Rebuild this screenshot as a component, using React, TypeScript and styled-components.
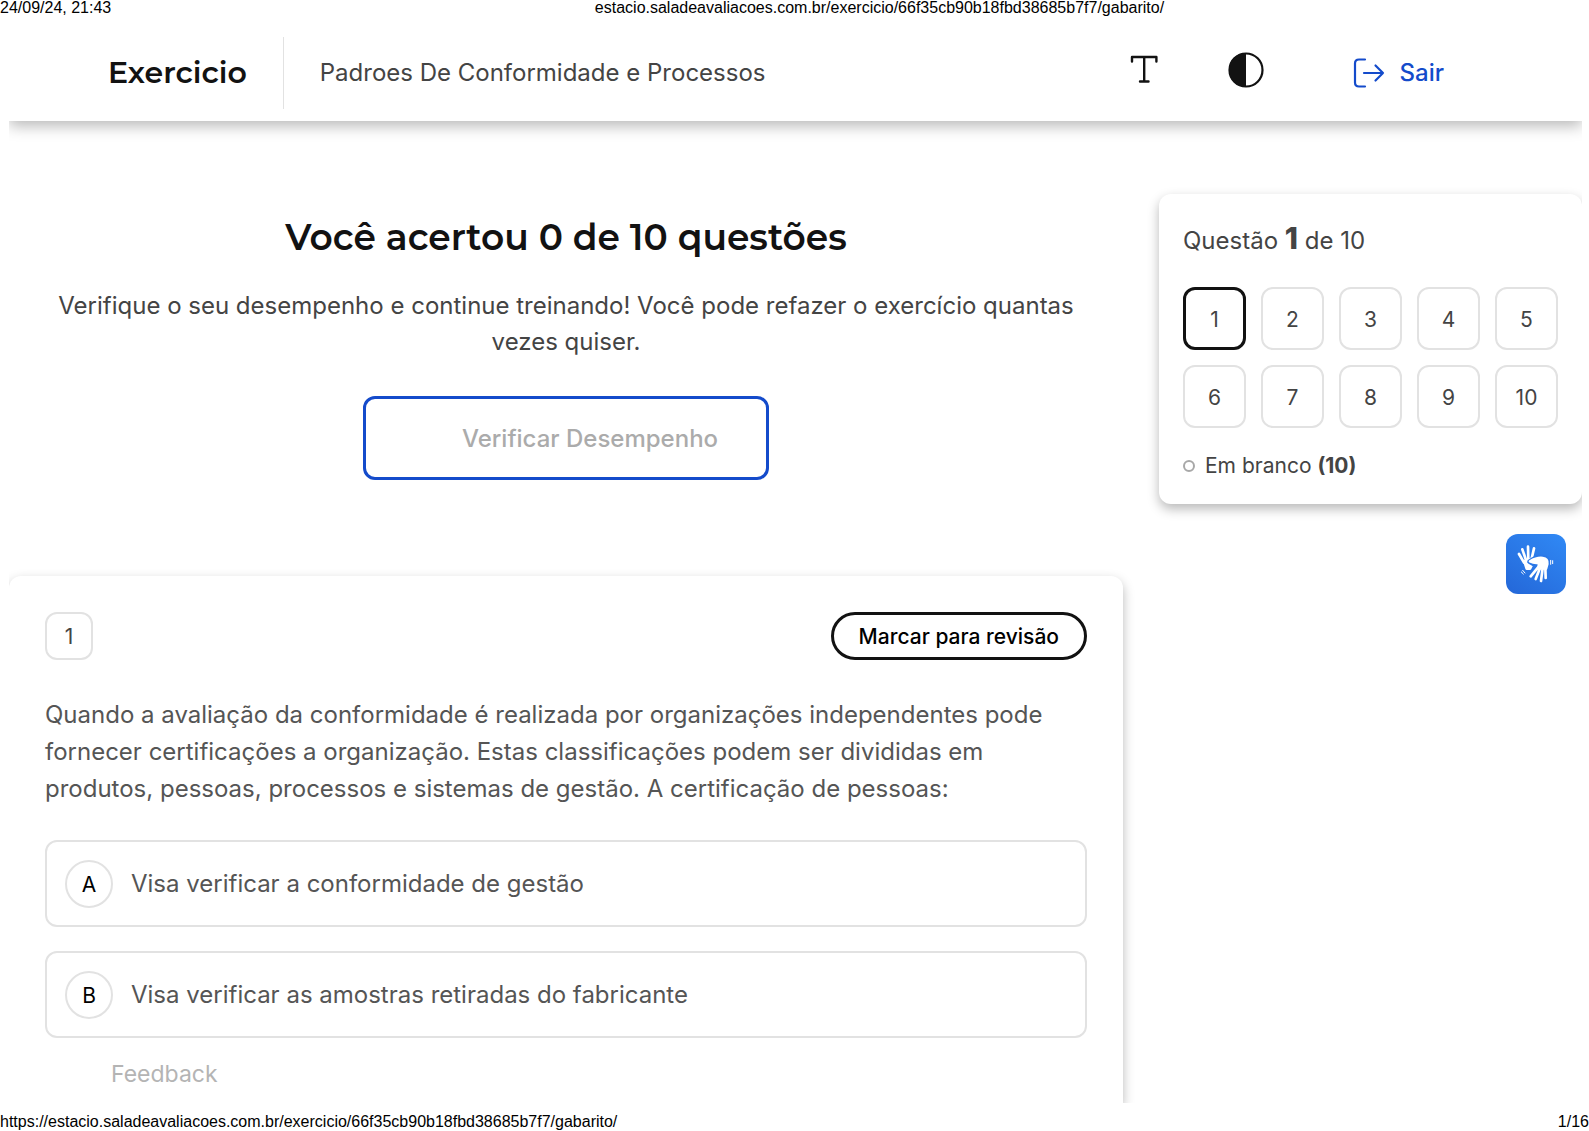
import React, { useState } from "react";
import styled, { createGlobalStyle } from "styled-components";

const ink = "#121212";
const text = "#444444";
const softText = "#555555";
const muted = "#ababab";
const line = "#e2e2e2";
const blue = "#144bcb";

const GlobalStyle = createGlobalStyle`
  *, *::before, *::after { box-sizing: border-box; }
  body {
    margin: 0;
    background: #ffffff;
    color: ${text};
    font-family: Inter, "Liberation Sans", sans-serif;
    font-size: 24px;
    line-height: 36px;
  }
  h1, h2, p { margin: 0; }
  button { font-family: inherit; cursor: pointer; }
`;

const Page = styled.div`
  display: flex;
  flex-direction: column;
  min-height: 100vh;
`;

const PrintLine = styled.div`
  display: grid;
  grid-template-columns: 7fr auto 5fr;
  align-items: start;
  color: #000000;
  font-family: "Liberation Sans", Arial, sans-serif;
  font-size: 16px;
  line-height: 16px;
`;

const PrintTop = styled(PrintLine)`
  height: 25px;
`;

const PrintBottom = styled(PrintLine)`
  grid-template-columns: 1fr auto;
  height: 28px;
  align-items: center;
  padding-top: 10px;
`;

const PrintLabel = styled.span`
  white-space: nowrap;
`;

const Sheet = styled.div`
  flex: 1;
  display: flex;
  flex-direction: column;
  margin: 0 7px 0 9px;
  overflow: hidden;
`;

const Header = styled.header`
  display: flex;
  align-items: center;
  justify-content: space-between;
  height: 96px;
  padding: 0 138px 0 99px;
  background: #ffffff;
  box-shadow: 0 5px 14px rgba(0, 0, 0, 0.28);
  clip-path: inset(0 0 -24px 0);
`;

const Titles = styled.div`
  display: flex;
  align-items: center;
`;

const Brand = styled.h1`
  padding-right: 36px;
  border-right: 1px solid ${line};
  color: ${ink};
  font-family: Montserrat, Inter, sans-serif;
  font-size: 30px;
  font-weight: 600;
  line-height: 72px;
`;

const Subject = styled.p`
  padding-left: 36px;
`;

const Actions = styled.div`
  display: flex;
  align-items: center;
`;

const IconButton = styled.button`
  display: flex;
  margin: 0 66px 6px 0;
  padding: 0;
  border: 0;
  background: none;
  color: ${ink};
`;

const ExitLink = styled.a`
  display: flex;
  align-items: center;
  gap: 13px;
  margin-left: 21px;
  color: ${blue};
  font-weight: 500;
  text-decoration: none;
`;

const Main = styled.main`
  flex: 1;
  display: grid;
  grid-template-columns: minmax(0, 1fr) 423px;
  column-gap: 36px;
  padding-top: 73px;
`;

const Column = styled.div`
  display: flex;
  flex-direction: column;
`;

const Score = styled.section`
  display: flex;
  flex-direction: column;
  align-items: center;
  padding: 20px 36px 96px;
  text-align: center;
`;

const ScoreTitle = styled.h2`
  margin-bottom: 28px;
  color: ${ink};
  font-family: Montserrat, Inter, sans-serif;
  font-size: 36px;
  font-weight: 600;
  line-height: 46px;
`;

const PerformanceButton = styled.button`
  height: 84px;
  margin-top: 36px;
  padding: 0 48px 0 96px;
  border: 3px solid ${blue};
  border-radius: 12px;
  background: none;
  color: ${muted};
  font-size: 24px;
  font-weight: 500;
`;

const QuestionCard = styled.section`
  flex: 1;
  padding: 36px 36px 10px;
  border-radius: 12px 12px 0 0;
  box-shadow: 0 5px 12px rgba(0, 0, 0, 0.28);
`;

const QuestionTop = styled.div`
  display: flex;
  align-items: center;
  justify-content: space-between;
  margin-bottom: 36px;
`;

const QuestionNumber = styled.span`
  display: grid;
  place-items: center;
  width: 48px;
  height: 48px;
  padding-top: 2px;
  border: 2px solid ${line};
  border-radius: 12px;
  font-size: 21px;
`;

const ReviewButton = styled.button`
  height: 48px;
  padding: 0 25px;
  border: 3px solid ${ink};
  border-radius: 24px;
  background: none;
  color: #000000;
  font-size: 21px;
  font-weight: 500;
`;

const Statement = styled.p`
  margin-bottom: 33px;
  color: ${softText};
  line-height: 37px;
`;

const Options = styled.div`
  display: grid;
  gap: 24px;
  margin-bottom: 18px;
`;

const Option = styled.label`
  display: flex;
  align-items: center;
  gap: 18px;
  height: 87px;
  padding: 0 18px;
  border: 2px solid ${line};
  border-radius: 12px;
  color: ${softText};
  cursor: pointer;
`;

const OptionInput = styled.input`
  appearance: none;
  width: 0;
  height: 0;
  margin: 0 -18px 0 0;
`;

const Letter = styled.span`
  display: grid;
  place-items: center;
  width: 48px;
  height: 48px;
  padding-top: 2px;
  border: 2px solid ${line};
  border-radius: 50%;
  color: #000000;
  font-size: 21px;
`;

const Feedback = styled.p`
  padding-left: 66px;
  color: #b4b4b4;
  font-size: 23px;
`;

const Side = styled.aside`
  display: flex;
  flex-direction: column;
  align-items: flex-end;
  gap: 30px;
`;

const Navigator = styled.nav`
  width: 100%;
  padding: 24px 24px 20px;
  border-radius: 12px;
  box-shadow: 0 5px 12px rgba(0, 0, 0, 0.28);
`;

const Progress = styled.p`
  margin-bottom: 24px;
  line-height: 45px;
`;

const Current = styled.strong`
  font-size: 30px;
  font-weight: 800;
  line-height: 1;
`;

const NumberGrid = styled.div`
  display: grid;
  grid-template-columns: repeat(5, 1fr);
  gap: 15px;
`;

const NumberButton = styled.button<{ $active: boolean }>`
  height: 63px;
  padding: 2px 0 0;
  border: ${({ $active }) => ($active ? `3px solid ${ink}` : `2px solid ${line}`)};
  border-radius: 12px;
  background: none;
  color: ${text};
  font-size: 21px;
`;

const Legend = styled.p`
  display: flex;
  align-items: center;
  gap: 10px;
  margin-top: 20px;
  font-size: 21px;
`;

const Dot = styled.span`
  width: 12px;
  height: 12px;
  border: 2px solid #a8a8a8;
  border-radius: 50%;
`;

const SignButton = styled.button`
  display: block;
  width: 60px;
  height: 60px;
  margin-right: 16px;
  padding: 0;
  border: 0;
  border-radius: 12px;
  background: linear-gradient(35deg, #2467d8, #3089f5);
`;

const TextIcon = () => (
  <svg width="36" height="36" viewBox="0 0 36 36" fill="none" stroke="currentColor" strokeWidth="2.4" strokeLinecap="round" strokeLinejoin="round" aria-hidden="true">
    <path d="M6 9.5V5h24.4v4.5M18.2 5v24.500M14 29.500h8.500" />
  </svg>
);

const ContrastIcon = () => (
  <svg width="36" height="36" viewBox="0 0 36 36" aria-hidden="true">
    <circle cx="18" cy="18" r="16.5" fill="none" stroke="currentColor" strokeWidth="2.2" />
    <path d="M18 1a17 17 0 0 0 0 34z" fill="currentColor" />
  </svg>
);

const ExitIcon = () => (
  <svg width="36" height="36" viewBox="0 0 36 36" fill="none" stroke="currentColor" strokeWidth="2.2" strokeLinecap="round" strokeLinejoin="round" aria-hidden="true">
    <path d="M14 4.500H8Q4 4.500 4 8.500V27.500Q4 31.500 8 31.500H14M13 18H32M24.500 10.500L32 18l-7.500 7.500" />
  </svg>
);

const SignIcon = () => (
  <svg width="60" height="60" viewBox="0 0 180 180" fill="none" strokeLinecap="round" strokeLinejoin="round" aria-hidden="true">
    <g stroke="#ffffff" strokeWidth="8">
      <path d="M39 60L54 86M49 46L60 78M66 38L67 76M84 43L76 78" />
      <path d="M55 82L78 74L80 88L72 104H62Z" fill="#ffffff" />
    </g>
    <path d="M70 83Q90 67 110 69Q128 72 126 90L120 104L98 104L84 116L92 94Q82 91 70 83Z" fill="#2b78e7" stroke="#2b78e7" strokeWidth="13" />
    <g stroke="#ffffff" strokeWidth="8">
      <path d="M98 98L74 127M103 100L89 135M110 102L105 141M118 100L119 132" />
      <path d="M72 82Q92 70 110 72Q126 74 124 90L120 104L98 102L99 86Q86 89 72 82Z" fill="#ffffff" />
    </g>
    <path d="M134 79v12M140 80v9M50 109l7 8M46 114l6 6" stroke="#ffffff" strokeWidth="3" />
  </svg>
);

const address = "estacio.saladeavaliacoes.com.br/exercicio/66f35cb90b18fbd38685b7f7/gabarito/";
const numbers = Array.from({ length: 10 }, (_, i) => i + 1);
const options = [
  { letter: "A", label: "Visa verificar a conformidade de gestão" },
  { letter: "B", label: "Visa verificar as amostras retiradas do fabricante" },
];

export default function App() {
  const [current, setCurrent] = useState(1);

  return (
    <Page>
      <GlobalStyle />
      <PrintTop>
        <PrintLabel>24/09/24, 21:43</PrintLabel>
        <PrintLabel>{address}</PrintLabel>
      </PrintTop>
      <Sheet>
        <Header>
          <Titles>
            <Brand>Exercicio</Brand>
            <Subject>Padroes De Conformidade e Processos</Subject>
          </Titles>
          <Actions>
            <IconButton type="button" aria-label="Tamanho do texto"><TextIcon /></IconButton>
            <IconButton type="button" aria-label="Contraste"><ContrastIcon /></IconButton>
            <ExitLink href="#sair"><ExitIcon />Sair</ExitLink>
          </Actions>
        </Header>
        <Main>
          <Column>
            <Score>
              <ScoreTitle>Você acertou 0 de 10 questões</ScoreTitle>
              <p>Verifique o seu desempenho e continue treinando! Você pode refazer o exercício quantas vezes quiser.</p>
              <PerformanceButton type="button">Verificar Desempenho</PerformanceButton>
            </Score>
            <QuestionCard>
              <QuestionTop>
                <QuestionNumber>{current}</QuestionNumber>
                <ReviewButton type="button">Marcar para revisão</ReviewButton>
              </QuestionTop>
              <Statement>
                Quando a avaliação da conformidade é realizada por organizações independentes pode fornecer
                certificações a organização. Estas classificações podem ser divididas em produtos, pessoas,
                processos e sistemas de gestão. A certificação de pessoas:
              </Statement>
              <Options>
                {options.map(({ letter, label }) => (
                  <Option key={letter}>
                    <OptionInput type="radio" name="answer" value={letter} />
                    <Letter>{letter}</Letter>
                    {label}
                  </Option>
                ))}
              </Options>
              <Feedback>Feedback</Feedback>
            </QuestionCard>
          </Column>
          <Side>
            <Navigator>
              <Progress>Questão <Current>{current}</Current> de 10</Progress>
              <NumberGrid>
                {numbers.map((n) => (
                  <NumberButton key={n} type="button" $active={n === current} onClick={() => setCurrent(n)}>
                    {n}
                  </NumberButton>
                ))}
              </NumberGrid>
              <Legend><Dot /><span>Em branco <strong>(10)</strong></span></Legend>
            </Navigator>
            <SignButton type="button" aria-label="Libras"><SignIcon /></SignButton>
          </Side>
        </Main>
      </Sheet>
      <PrintBottom>
        <PrintLabel>https://{address}</PrintLabel>
        <PrintLabel>1/16</PrintLabel>
      </PrintBottom>
    </Page>
  );
}
